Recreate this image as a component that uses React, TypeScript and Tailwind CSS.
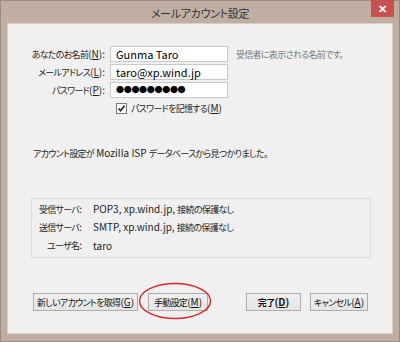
import React from "react";

const FONT = "font-['Noto_Sans_CJK_JP',sans-serif] [font-feature-settings:'palt']";

// 和文だけ少し小さくして Meiryo UI の詰まった幅に寄せる
function jp(s: string) {
  return s.split(/([\u3000-\u30ff\u4e00-\u9fff\uff01-\uff60]+)/).map((part, i) =>
    /[\u3000-\u30ff\u4e00-\u9fff\uff01-\uff60]/.test(part) ? (
      <span key={i} className="text-[9px] tracking-[-0.7px]">
        {part}
      </span>
    ) : (
      <React.Fragment key={i}>{part}</React.Fragment>
    )
  );
}

function Key({ label, k, bold }: { label: string; k: string; bold?: boolean }) {
  return (
    <span className={`whitespace-nowrap ${bold ? "font-bold" : ""}`}>
      {jp(label)}(<span className="underline">{k}</span>)
    </span>
  );
}

function Btn({ w, children }: { w: string; children: React.ReactNode }) {
  return (
    <button
      className={`${w} h-[18px] flex items-center justify-center border border-[#adadad] bg-gradient-to-b from-[#f0f0f0] to-[#e5e5e5] text-[10px] leading-none text-[#111]`}
    >
      {children}
    </button>
  );
}

export default function App() {
  const rows = [
    { label: "あなたのお名前", k: "N", value: "Gunma Taro" },
    { label: "メールアドレス", k: "L", value: "taro@xp.wind.jp" },
    { label: "パスワード", k: "P", value: "" },
  ];

  return (
    <div className={`w-[400px] h-[342px] bg-[#bfaea1] border border-[#9c8c80] flex flex-col ${FONT}`}>
      {/* タイトルバー */}
      <div className="relative h-[22px] shrink-0 flex items-center justify-center">
        <span className="text-[11px] tracking-[-0.3px] text-[#333] pt-[3px]">メールアカウント設定</span>
        <div className="absolute right-[5px] top-[-1px] w-[23px] h-[17px] bg-[#c75050] flex items-center justify-center text-white text-[11px] font-bold leading-none">
          ✕
        </div>
      </div>

      {/* 本体 */}
      <div className="mx-[6px] mb-[7px] flex-1 bg-[#f0f0f0] border border-[#d8cec6] flex flex-col text-[10px] text-[#1e1e1e]">
        <div className="mt-[22px] flex flex-col gap-[2px]">
          {rows.map((r, i) => (
            <div key={r.k} className="flex items-center h-[16px]">
              <div className="w-[97px] text-right whitespace-nowrap">
                {jp(r.label)}(<span className="underline">{r.k}</span>):
              </div>
              <div className="ml-[5px] w-[118px] h-[16px] bg-white border border-[#c9c9c9] flex items-center pl-[5px] text-[11px] text-black">
                {i === 2 ? (
                  <span className="text-[8px] tracking-[-0.3px] leading-none">●●●●●●●●●</span>
                ) : (
                  r.value
                )}
              </div>
              {i === 0 && (
                <span className="ml-[8px] text-[#7a7a7a] whitespace-nowrap">{jp("受信者に表示される名前です。")}</span>
              )}
            </div>
          ))}
          <div className="flex items-center h-[12px] mt-[2px] ml-[108px]">
            <span className="w-[11px] h-[11px] bg-white border border-[#7a7a7a] flex items-center justify-center">
              <svg width="9" height="9" viewBox="0 0 9 9">
                <path d="M1.5 4.5 L3.6 6.8 L7.6 1.8" fill="none" stroke="#222" strokeWidth="1.6" />
              </svg>
            </span>
            <span className="ml-[4px] whitespace-nowrap">
              {jp("パスワードを記憶する")}(<span className="underline">M</span>)
            </span>
          </div>
        </div>

        <div className="mt-[32px] ml-[25px] h-[14px] leading-[14px] whitespace-nowrap">
          {jp("アカウント設定が Mozilla ISP データベースから見つかりました。")}
        </div>

        <div className="mt-[38px] ml-[23px] w-[340px] h-[60px] border border-[#dcdcdc] pt-[1px] flex flex-col">
          {[
            ["受信サーバ:", "POP3, xp.wind.jp, 接続の保護なし"],
            ["送信サーバ:", "SMTP, xp.wind.jp, 接続の保護なし"],
            ["ユーザ名:", "taro"],
          ].map(([l, v]) => (
            <div key={l} className="flex items-center h-[18px]">
              <div className="w-[50px] text-right whitespace-nowrap">{jp(l)}</div>
              <div className="ml-[11px] whitespace-nowrap">{jp(v)}</div>
            </div>
          ))}
        </div>

        <div className="mt-[35px] ml-[25px] flex items-center">
          <Btn w="w-[105px]">
            <Key label="新しいアカウントを取得" k="G" />
          </Btn>
          <div className="relative ml-[10px]">
            <Btn w="w-[60px]">
              <Key label="手動設定" k="M" />
            </Btn>
            <svg className="absolute left-[-10px] top-[-11px] pointer-events-none" width="74" height="38" viewBox="0 0 74 38">
              <ellipse cx="37" cy="19" rx="35.5" ry="17.5" fill="none" stroke="#d9282f" strokeWidth="1.5" />
            </svg>
          </div>
          <div className="ml-[38px]">
            <Btn w="w-[55px]">
              <Key label="完了" k="D" bold />
            </Btn>
          </div>
          <div className="ml-[9px]">
            <Btn w="w-[58px]">
              <Key label="キャンセル" k="A" />
            </Btn>
          </div>
        </div>
      </div>
    </div>
  );
}
